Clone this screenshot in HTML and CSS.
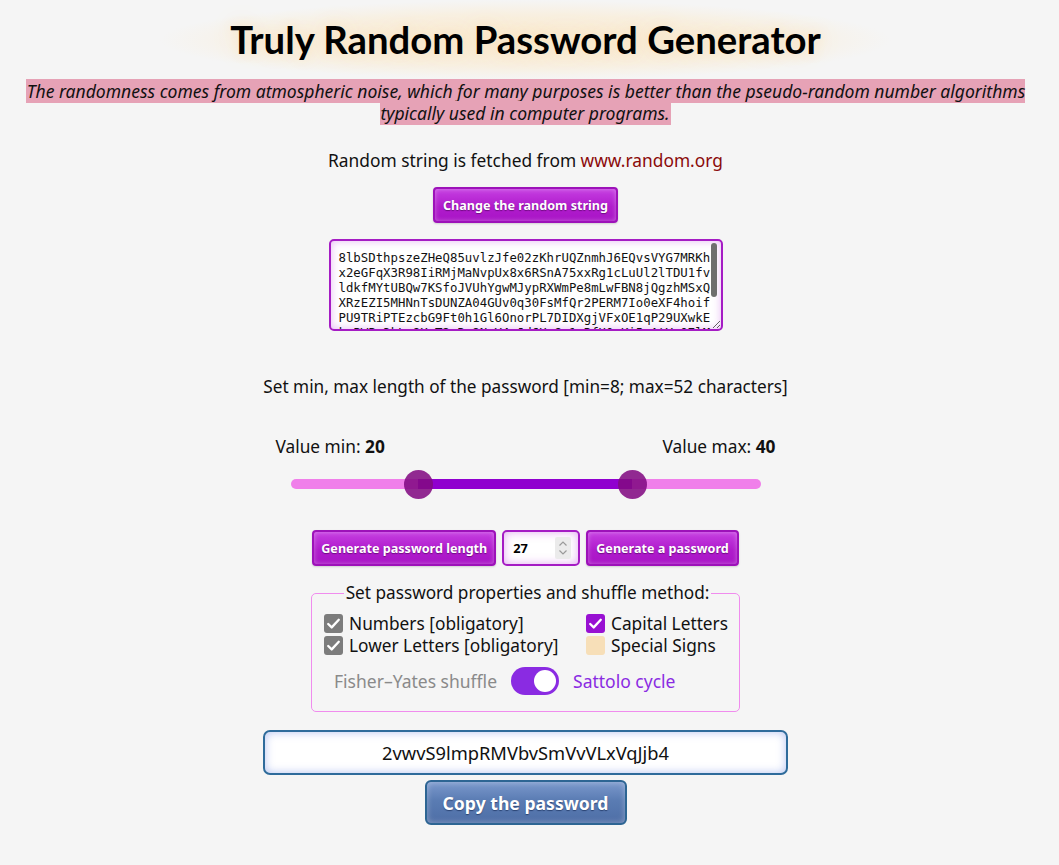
FILE: index.html
```html
<!DOCTYPE html>
<html lang="en">
<head>
<meta charset="utf-8">
<title>Truly Random Password Generator</title>
<link rel="stylesheet" href="styles.css">
</head>
<body>
<main class="page">
  <h1 class="title">Truly Random Password Generator</h1>
  <p class="intro"><span class="intro-mark">The randomness comes from atmospheric noise, which for many purposes is better than the pseudo-random number algorithms typically used in computer programs.</span></p>

  <p class="source">Random string is fetched from <a class="source-link" href="#">www.random.org</a></p>
  <button class="btn btn-purple btn-change">Change the random string</button>

  <div class="rand-wrap">
    <textarea class="rand" spellcheck="false">8lbSDthpszeZHeQ85uvlzJfe02zKhrUQZnmhJ6EQvsVYG7MRKh
x2eGFqX3R98IiRMjMaNvpUx8x6RSnA75xxRg1cLuUl2lTDU1fv
ldkfMYtUBQw7KSfoJVUhYgwMJypRXWmPe8mLwFBN8jQgzhMSxQ
XRzEZI5MHNnTsDUNZA04GUv0q30FsMfQr2PERM7Io0eXF4hoif
PU9TRiPTEzcbG9Ft0h1Gl6OnorPL7DIDXgjVFxOE1qP29UXwkE
k.PWPa3kLq9XmT2vRz8NcY4pJd6HwGe1sBfU0oKi5nAtVyQ7lM
tR4Wq8ZpLm2XcV6bN0sJfK9yHd3GaE1uOiY5rT7wPxQzC8vB2n</textarea>
    <span class="rand-thumb"></span>
  </div>

  <p class="range-label">Set min, max length of the password [min=8; max=52 characters]</p>

  <div class="slider-box">
    <div class="values">
      <span>Value min: <b>20</b></span>
      <span>Value max: <b>40</b></span>
    </div>
    <div class="slider">
      <div class="track"></div>
      <div class="range" style="left:27.2%; width:45.5%"></div>
      <div class="thumb" style="left:27.2%"></div>
      <div class="thumb" style="left:72.7%"></div>
    </div>
  </div>

  <div class="actions">
    <button class="btn btn-purple btn-len">Generate password length</button>
    <div class="num">
      <input class="num-input" type="text" value="27">
      <span class="spin"><svg viewBox="0 0 16 22"><path d="M4.5 8.5L8 5l3.5 3.5M4.5 13.5L8 17l3.5-3.5" fill="none" stroke="#9a9a9a" stroke-width="1.2"/></svg></span>
    </div>
    <button class="btn btn-purple btn-gen">Generate a password</button>
  </div>

  <fieldset class="props">
    <legend class="props-legend">Set password properties and shuffle method:</legend>
    <div class="checks">
      <label class="check"><span class="box box-grey"><svg viewBox="0 0 18 18"><path d="M4 9.5l3.3 3.2L14 5.5" fill="none" stroke="#fff" stroke-width="2.2" stroke-linecap="round" stroke-linejoin="round"/></svg></span>Numbers [obligatory]</label>
      <label class="check"><span class="box box-purple"><svg viewBox="0 0 18 18"><path d="M4 9.5l3.3 3.2L14 5.5" fill="none" stroke="#fff" stroke-width="2.2" stroke-linecap="round" stroke-linejoin="round"/></svg></span>Capital Letters</label>
      <label class="check"><span class="box box-grey"><svg viewBox="0 0 18 18"><path d="M4 9.5l3.3 3.2L14 5.5" fill="none" stroke="#fff" stroke-width="2.2" stroke-linecap="round" stroke-linejoin="round"/></svg></span>Lower Letters [obligatory]</label>
      <label class="check"><span class="box box-empty"></span>Special Signs</label>
    </div>
    <div class="shuffle">
      <span class="shuffle-off">Fisher–Yates shuffle</span>
      <span class="toggle"><span class="knob"></span></span>
      <span class="shuffle-on">Sattolo cycle</span>
    </div>
  </fieldset>

  <div class="result">2vwvS9lmpRMVbvSmVvVLxVqJjb4</div>
  <button class="btn btn-blue">Copy the password</button>
</main>
</body>
</html>
```
FILE: styles.css
```css
html, body {
  margin: 0;
  padding: 0;
  background: #f5f5f5;
}

body {
  font-family: "Noto Sans", "Open Sans", sans-serif;
  font-size: 17px;
  color: #111;
}

.page {
  display: flex;
  flex-direction: column;
  align-items: center;
  text-align: center;
  padding-right: 8px;
}

.title {
  font-family: "Lato", "Noto Sans", sans-serif;
  font-weight: 700;
  font-size: 38.3px;
  line-height: 48px;
  margin: 0;
  padding: 15px 70px 17px;
  color: #000;
  background: radial-gradient(ellipse closest-side at 50% 50%, rgba(250, 232, 202, 0.95), rgba(250, 236, 212, 0.6) 65%, rgba(245, 245, 245, 0) 100%);
  text-shadow: 0 0 12px #f8e4c4, 0 0 26px #f9e8cf;
}

.intro {
  margin: 0;
  font-style: italic;
  font-size: 17.55px;
  line-height: 22px;
  padding: 0 16px;
}

.intro-mark {
  background: #e6a2b6;
  padding: 0 1px;
}

.source {
  margin: 25px 0 0;
  line-height: 22px;
  font-size: 17.35px;
}

.source-link {
  color: #8b0a0a;
  text-decoration: none;
}

.btn {
  font-family: "Noto Sans", sans-serif;
  font-weight: 700;
  color: #fff;
  cursor: pointer;
  white-space: nowrap;
}

.btn-purple {
  height: 36px;
  padding: 0 8px;
  font-size: 12.6px;
  border: 2px solid #9d12b9;
  border-radius: 4px;
  background: linear-gradient(#c63fe2, #b01ccc 55%, #a914c6);
  box-shadow: inset 0 0 5px rgba(255, 255, 255, 0.35), 0 1px 2px rgba(0, 0, 0, 0.15);
  text-shadow: 0 1px 1px rgba(60, 0, 70, 0.55);
}

.btn-change {
  margin-top: 16px;
}

.rand-wrap {
  position: relative;
  margin-top: 16px;
}

.rand {
  display: block;
  box-sizing: border-box;
  width: 394px;
  height: 92px;
  margin: 0;
  padding: 10px 14px 4px 8px;
  font-family: "DejaVu Sans Mono", monospace;
  font-size: 12.35px;
  line-height: 15px;
  color: #111;
  white-space: pre;
  overflow: hidden;
  border: 2px solid #a51cc4;
  border-radius: 5px;
  background: #fff;
  box-shadow: inset 0 0 9px rgba(200, 100, 230, 0.45);
  resize: both;
}

.rand-thumb {
  position: absolute;
  right: 6px;
  top: 4px;
  width: 6px;
  height: 54px;
  border-radius: 3px;
  background: #6e6e6e;
}

.range-label {
  margin: 45px 0 0;
  line-height: 22px;
  font-size: 17.2px;
}

.slider-box {
  width: 500px;
  margin-top: 38px;
}

.values {
  display: flex;
  justify-content: space-between;
  line-height: 22px;
  font-size: 17.3px;
}

.values b {
  font-weight: 700;
}

.slider {
  position: relative;
  height: 28px;
  margin: 12px 15px 0;
}

.track {
  position: absolute;
  left: 0;
  right: 0;
  top: 9px;
  height: 10px;
  border-radius: 5px;
  background: #f07fea;
}

.range {
  position: absolute;
  top: 9px;
  height: 10px;
  background: #9000cf;
}

.thumb {
  position: absolute;
  top: 0;
  width: 29px;
  height: 29px;
  margin-left: -14.5px;
  border-radius: 50%;
  background: rgba(130, 10, 130, 0.87);
}

.actions {
  display: flex;
  gap: 6px;
  margin-top: 32px;
  align-items: stretch;
}

.btn-len {
  padding: 0 7px;
}

.btn-gen {
  padding: 0 8px;
}

.num {
  box-sizing: border-box;
  display: flex;
  align-items: center;
  width: 78px;
  height: 36px;
  padding: 0 7px 0 9px;
  border: 2px solid #a51cc4;
  border-radius: 5px;
  background: #fff;
  box-shadow: inset 0 0 10px rgba(200, 90, 230, 0.5);
}

.num-input {
  width: 40px;
  min-width: 0;
  flex: 1;
  padding: 0;
  border: 0;
  background: transparent;
  outline: none;
  font-family: "Noto Sans", sans-serif;
  font-weight: 700;
  font-size: 12.8px;
  color: #000;
}

.spin {
  display: inline-flex;
  width: 16px;
  height: 22px;
  background: #ebebeb;
  border-radius: 2px;
}

.spin svg {
  width: 16px;
  height: 22px;
}

.props {
  box-sizing: border-box;
  width: 429px;
  margin: 16px 0 0;
  padding: 9px 8px 16px 12px;
  border: 1px solid #f08cee;
  border-radius: 5px;
  text-align: left;
}

.props-legend {
  padding: 0 2px;
  margin: 0 auto;
  font-size: 17.2px;
  line-height: 22px;
}

.checks {
  display: grid;
  grid-template-columns: 262px auto;
  row-gap: 1px;
}

.check {
  display: flex;
  align-items: center;
  gap: 6px;
  font-size: 17.3px;
  line-height: 21px;
}

.box {
  display: inline-flex;
  width: 19px;
  height: 19px;
  border-radius: 3px;
  flex: none;
}

.box svg {
  width: 19px;
  height: 19px;
}

.box-grey {
  background: #7c7c7c;
}

.box-purple {
  background: #9810d2;
}

.box-empty {
  background: #f7dfb8;
}

.shuffle {
  display: flex;
  align-items: center;
  gap: 14px;
  margin-top: 11px;
  padding-left: 10px;
  font-size: 17.5px;
  line-height: 28px;
}

.shuffle-off {
  color: #8a8a8a;
}

.shuffle-on {
  color: #8a2be2;
}

.toggle {
  position: relative;
  width: 48px;
  height: 28px;
  border-radius: 14px;
  background: #8a2be2;
  display: inline-block;
}

.knob {
  position: absolute;
  right: 3px;
  top: 3px;
  width: 22px;
  height: 22px;
  border-radius: 50%;
  background: #fff;
}

.result {
  box-sizing: border-box;
  width: 525px;
  height: 45px;
  margin-top: 18px;
  line-height: 41px;
  font-size: 18.3px;
  color: #111;
  border: 2px solid #2e6b9b;
  border-radius: 7px;
  background: #fff;
  box-shadow: inset 0 0 10px rgba(150, 170, 235, 0.7);
}

.btn-blue {
  margin-top: 5px;
  width: 202px;
  height: 45px;
  font-size: 17.6px;
  border: 2px solid #2d6593;
  border-radius: 6px;
  background: linear-gradient(#7b98cc, #5a7cb3 45%, #4e6ea6);
  box-shadow: inset 0 0 6px rgba(255, 255, 255, 0.35);
  text-shadow: 0 1px 1px rgba(0, 20, 60, 0.5);
}
```
